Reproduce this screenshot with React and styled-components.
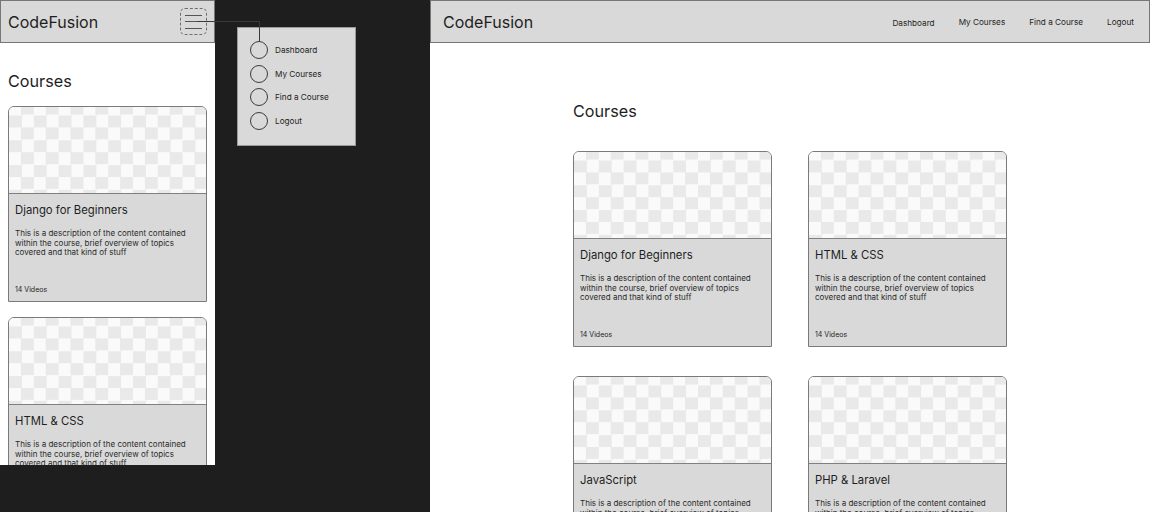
import React from 'react';
import styled, { createGlobalStyle } from 'styled-components';

const GlobalStyle = createGlobalStyle`
    body {
        margin: 0;
        background: #1e1e1e;
        font-family: 'Inter', 'Noto Sans', sans-serif;
        color: #1e1e1e;
    }
`

const Stage = styled.div`
    position: relative;
    display: flex;
    height: 512px;
    overflow: hidden;
`

const MobileFrame = styled.div`
    width: 215px;
    height: 465px;
    flex-shrink: 0;
    background: #fff;
    overflow: hidden;
`

const MenuColumn = styled.div`
    width: 215px;
    flex-shrink: 0;
    padding: 27px 0 0 22px;
    box-sizing: border-box;
`

const DesktopFrame = styled.div`
    flex: 1;
    height: 512px;
    background: #fff;
    overflow: hidden;
`

const Header = styled.header`
    height: 43px;
    box-sizing: border-box;
    display: flex;
    align-items: center;
    justify-content: space-between;
    background: #d9d9d9;
    border: 1px solid #767676;
    padding: ${props => props.$pad};
`

const Logo = styled.div`
    font-size: 16px;
    line-height: 20px;
`

const MenuButton = styled.div`
    width: 27px;
    height: 27px;
    box-sizing: border-box;
    border: 1px dashed #6f6f6f;
    border-radius: 5px;
    padding: 0 4px;
    display: flex;
    flex-direction: column;
    justify-content: center;
    gap: 5.5px;
    cursor: pointer;
`

const MenuBar = styled.span`
    display: block;
    height: 1px;
    background: #555;
`

const Nav = styled.nav`
    display: flex;
    align-items: center;
    gap: 24px;
`

const NavLink = styled.a`
    font-size: 8.2px;
    color: #1e1e1e;
    text-decoration: none;
    margin-top: ${props => props.$low ? '3px' : '0'};
`

const Dropdown = styled.div`
    width: 119px;
    height: 119px;
    box-sizing: border-box;
    background: #d9d9d9;
    border: 1px solid #9a9a9a;
    padding: 13px 0 0 12px;
    display: flex;
    flex-direction: column;
    gap: 5.5px;
`

const DropItem = styled.div`
    display: flex;
    align-items: center;
    gap: 7px;
    font-size: 8.2px;
`

const Dot = styled.span`
    width: 18px;
    height: 18px;
    box-sizing: border-box;
    border: 1px solid #3c3c3c;
    border-radius: 50%;
`

const MobileContent = styled.main`
    padding: 28px 9px 0 8px;
    display: flex;
    flex-direction: column;
    gap: 15px;
`

const DesktopContent = styled.main`
    width: 434px;
    margin: 0 auto;
    padding-top: 58px;
`

const Heading = styled.h1`
    margin: 0 0 ${props => props.$gap || '0'};
    font-size: 16.2px;
    line-height: 20px;
    font-weight: 400;
`

const Grid = styled.div`
    display: grid;
    grid-template-columns: 199px 199px;
    column-gap: 36px;
    row-gap: 29px;
`

const Card = styled.article`
    width: 199px;
    height: 196px;
    box-sizing: border-box;
    border: 1px solid #7a7a7a;
    border-radius: 6px 6px 0 0;
    overflow: hidden;
    display: flex;
    flex-direction: column;
    flex-shrink: 0;
`

const Thumb = styled.div`
    height: 86px;
    flex-shrink: 0;
    border-bottom: 1px solid #808080;
    background: repeating-conic-gradient(#e9e9e9 0 25%, #fafafa 0 50%) 0 -4.4px / 24.8px 24.8px;
`

const CardBody = styled.div`
    flex: 1;
    background: #d9d9d9;
    padding: 8px 6px 7px;
    display: flex;
    flex-direction: column;
`

const CardTitle = styled.h2`
    margin: 0;
    font-size: 11.3px;
    line-height: 16px;
    font-weight: 400;
`

const CardText = styled.p`
    margin: 11px 0 0;
    font-size: 8px;
    line-height: 9.5px;
    color: #2a2a2a;
`

const CardMeta = styled.span`
    margin-top: auto;
    font-size: 7px;
    line-height: 9px;
`

const Connector = styled.svg`
    position: absolute;
    left: 0;
    top: 0;
    pointer-events: none;
`

const description = 'This is a description of the content contained within the course, brief overview of topics covered and that kind of stuff';

const courses = [
    { id: 1, title: 'Django for Beginners', videos: 14 },
    { id: 2, title: 'HTML & CSS', videos: 14 },
    { id: 3, title: 'JavaScript', videos: 14 },
    { id: 4, title: 'PHP & Laravel', videos: 14 },
];

const links = ['Dashboard', 'My Courses', 'Find a Course', 'Logout'];

const CourseCard = ({ course }) => (
    <Card>
        <Thumb />
        <CardBody>
            <CardTitle>{course.title}</CardTitle>
            <CardText>{description}</CardText>
            <CardMeta>{`${course.videos} Videos`}</CardMeta>
        </CardBody>
    </Card>
)

const App = () => {
    return (
        <Stage>
            <GlobalStyle />
            <MobileFrame>
                <Header $pad="0 7px 0 7px">
                    <Logo>CodeFusion</Logo>
                    <MenuButton role="button" aria-label="menu">
                        <MenuBar />
                        <MenuBar />
                        <MenuBar />
                    </MenuButton>
                </Header>
                <MobileContent>
                    <Heading>Courses</Heading>
                    {courses.slice(0, 2).map(c => <CourseCard key={c.id} course={c} />)}
                </MobileContent>
            </MobileFrame>

            <MenuColumn>
                <Dropdown>
                    {links.map(l => (
                        <DropItem key={l}>
                            <Dot />
                            {l}
                        </DropItem>
                    ))}
                </Dropdown>
            </MenuColumn>

            <DesktopFrame>
                <Header $pad="0 15px 0 12px">
                    <Logo>CodeFusion</Logo>
                    <Nav>
                        {links.map((l, i) => <NavLink key={l} href="#" $low={i === 0}>{l}</NavLink>)}
                    </Nav>
                </Header>
                <DesktopContent>
                    <Heading $gap="30px">Courses</Heading>
                    <Grid>
                        {courses.map(c => <CourseCard key={c.id} course={c} />)}
                    </Grid>
                </DesktopContent>
            </DesktopFrame>

            {/* line from the menu button to the open menu */}
            <Connector width="270" height="45" viewBox="0 0 270 45">
                <path d="M197 21.5 H259.5 V41" fill="none" stroke="#3a3a3a" strokeWidth="1" />
            </Connector>
        </Stage>
    )
}

export default App;
